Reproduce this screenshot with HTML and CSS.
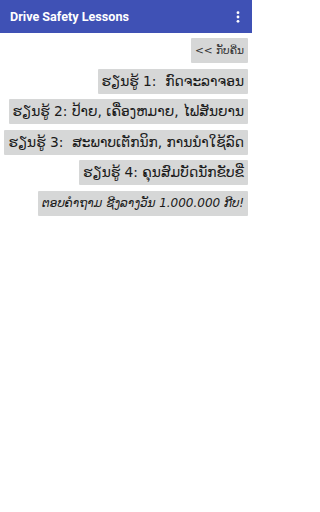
FILE: index.html
```html
<!DOCTYPE html>
<html lang="lo">
<head>
<meta charset="utf-8">
<title>Drive Safety Lessons</title>
<link rel="stylesheet" href="styles.css">
</head>
<body>
<header class="appbar">
  <span class="title">Drive Safety Lessons</span>
  <span class="menu" aria-label="More options">
    <svg width="4" height="12" viewBox="0 0 4 12"><circle cx="2" cy="1.7" r="1.4" fill="#fff"/><circle cx="2" cy="6" r="1.4" fill="#fff"/><circle cx="2" cy="10.3" r="1.4" fill="#fff"/></svg>
  </span>
</header>
<main class="list">
  <button class="btn btn-back">&lt;&lt; ກັບຄືນ</button>
  <button class="btn">ຮຽນຮູ້ 1:&nbsp; ກົດຈະລາຈອນ</button>
  <button class="btn">ຮຽນຮູ້ 2: ປ້າຍ, ເຄື່ອງຫມາຍ, ໄຟສັນຍານ</button>
  <button class="btn">ຮຽນຮູ້ 3:&nbsp; ສະພາບເຕັກນິກ, ການນຳໃຊ້ລົດ</button>
  <button class="btn">ຮຽນຮູ້ 4: ຄຸນສົມບັດນັກຂັບຂີ່</button>
  <button class="btn btn-quiz">ຕອບຄຳຖາມ ຊີງລາງວັນ 1.000.000 ກີບ!</button>
</main>
</body>
</html>
```
FILE: styles.css
```css
html, body {
  margin: 0;
  padding: 0;
  background: #ffffff;
  font-family: "DejaVu Sans", "Noto Sans", sans-serif;
}
body {
  width: 252px;
  overflow: hidden;
}
.appbar {
  height: 33px;
  background: #3f51b5;
  display: flex;
  align-items: center;
  justify-content: space-between;
  padding: 0 12px 0 10px;
  box-sizing: border-box;
}
.title {
  color: #ffffff;
  font-family: Roboto, "Liberation Sans", sans-serif;
  font-weight: 700;
  font-size: 12.6px;
}
.menu {
  display: flex;
  align-items: center;
  height: 12px;
}
.list {
  display: flex;
  flex-direction: column;
  align-items: flex-end;
  gap: 5.5px;
  padding: 5px 4px 0 0;
}
.btn {
  height: 25px;
  margin: 0;
  border: none;
  border-radius: 1px;
  background: #d6d7d7;
  color: #1a1a1a;
  font-family: "DejaVu Sans", "Noto Sans", sans-serif;
  font-size: 13.8px;
  padding: 0 4px;
  white-space: nowrap;
  line-height: 25px;
}
.btn-back {
  font-size: 10.6px;
  color: #333333;
}
.btn-quiz {
  font-style: italic;
  font-size: 12px;
}
```
